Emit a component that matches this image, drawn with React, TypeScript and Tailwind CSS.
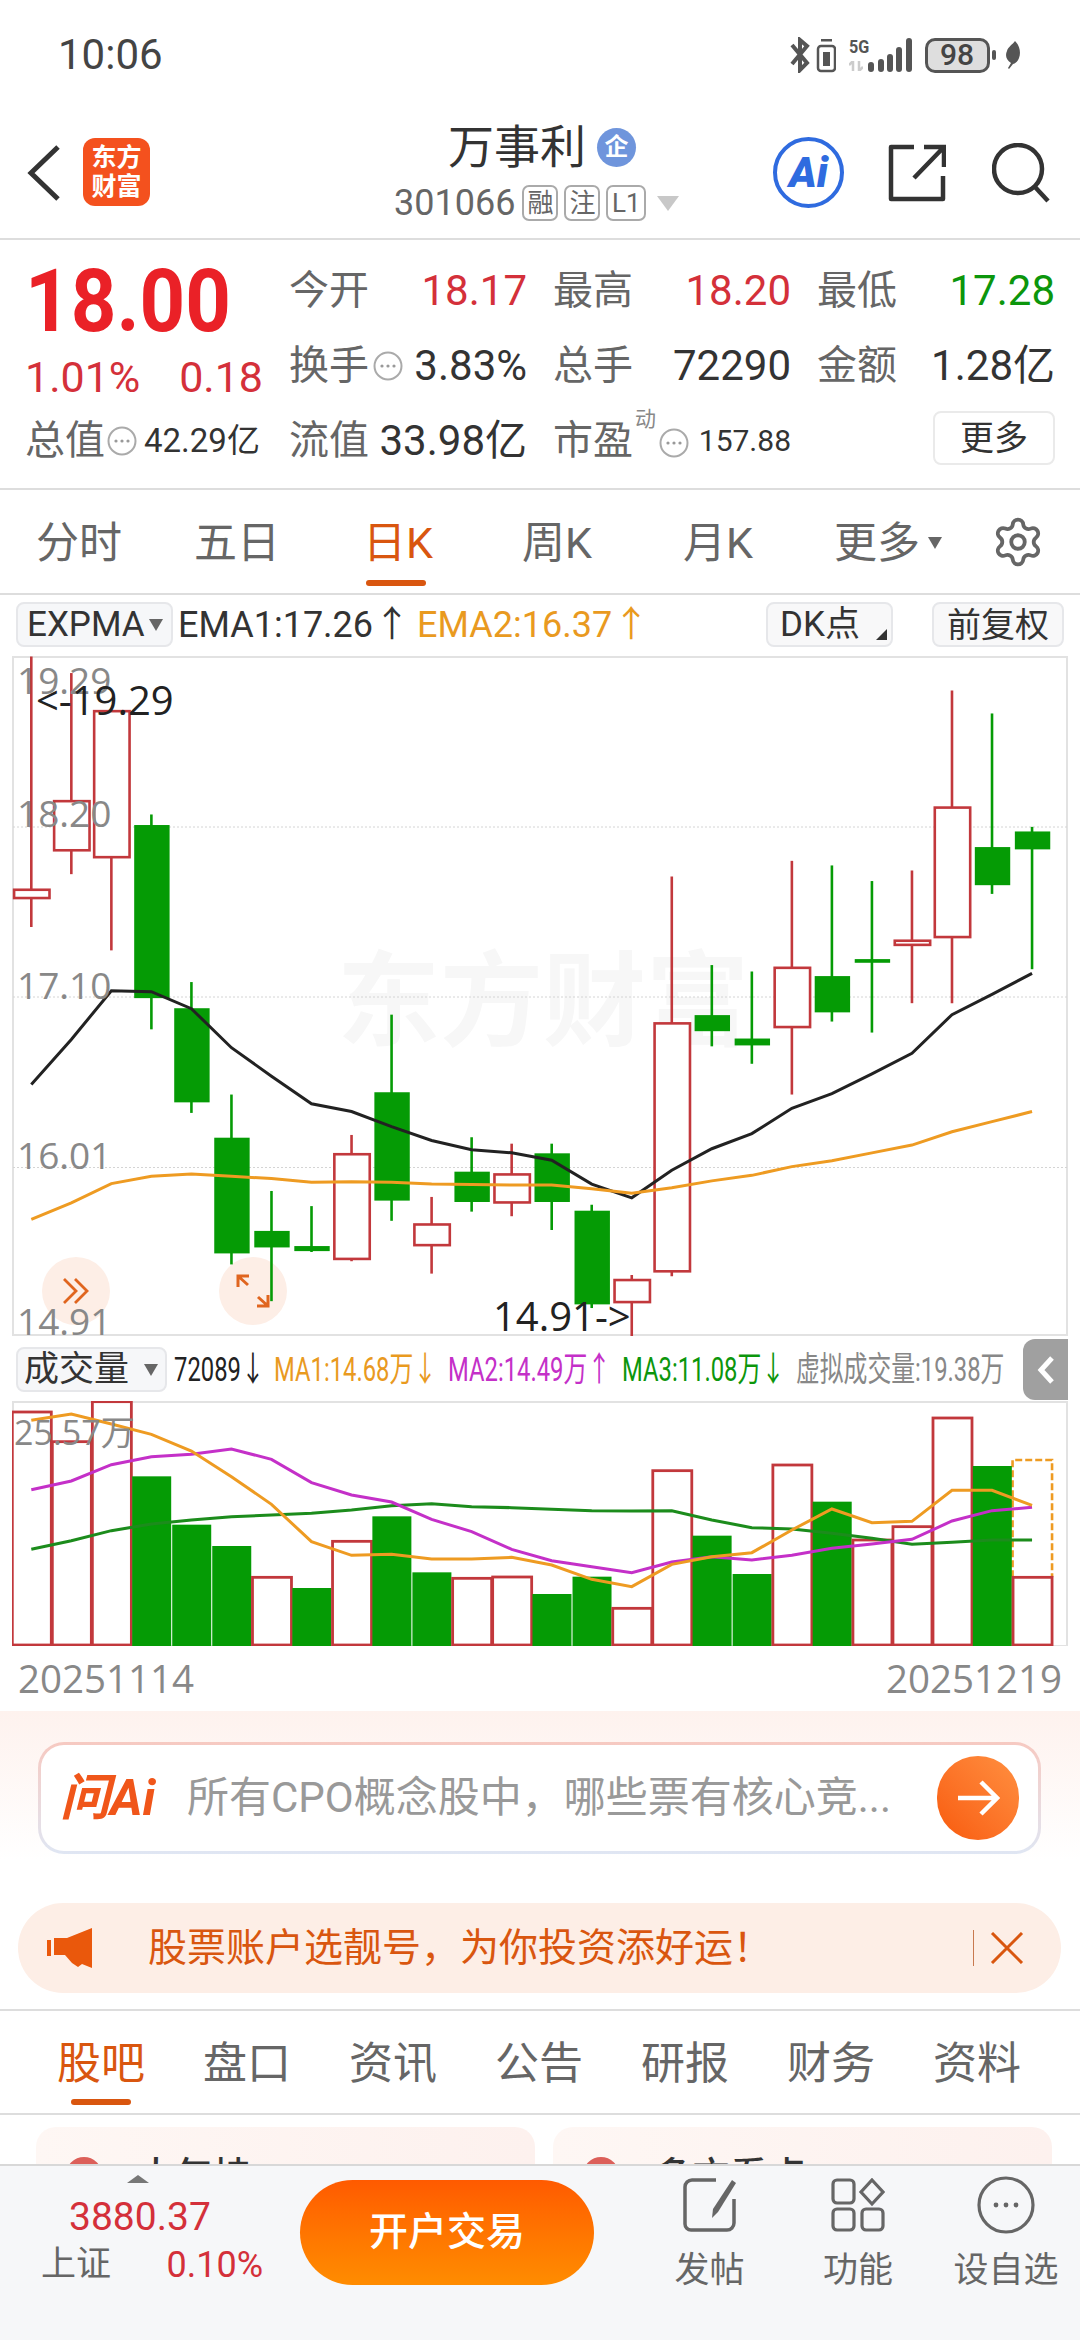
import { Settings } from "lucide-react";
import React from "react";

// ---- chart data, measured from the daily K chart ----
type Candle = { up: boolean; hi: number; lo: number; top: number; bot: number };

const cx = (i: number) => 31.3 + i * 40.03;
const ky = (v: number) => 640 + v / 2.178;
const vy = (v: number) => 1320 + v / 3;

const candles: Candle[] = [
  { up: true, hi: 36, lo: 625, top: 544, bot: 562 },
  { up: true, hi: 72, lo: 510, top: 351, bot: 458 },
  { up: true, hi: 155, lo: 676, top: 155, bot: 473 },
  { up: false, hi: 380, lo: 848, top: 403, bot: 780 },
  { up: false, hi: 745, lo: 1030, top: 802, bot: 1007 },
  { up: false, hi: 990, lo: 1360, top: 1084, bot: 1336 },
  { up: false, hi: 1200, lo: 1440, top: 1287, bot: 1323 },
  { up: false, hi: 1233, lo: 1333, top: 1320, bot: 1331 },
  { up: true, hi: 1078, lo: 1353, top: 1120, bot: 1348 },
  { up: false, hi: 816, lo: 1265, top: 985, bot: 1221 },
  { up: true, hi: 1213, lo: 1380, top: 1273, bot: 1318 },
  { up: false, hi: 1083, lo: 1245, top: 1158, bot: 1224 },
  { up: true, hi: 1097, lo: 1255, top: 1164, bot: 1225 },
  { up: false, hi: 1097, lo: 1285, top: 1118, bot: 1224 },
  { up: false, hi: 1230, lo: 1455, top: 1243, bot: 1447 },
  { up: true, hi: 1383, lo: 1518, top: 1394, bot: 1442 },
  { up: true, hi: 515, lo: 1386, top: 835, bot: 1375 },
  { up: false, hi: 708, lo: 885, top: 817, bot: 852 },
  { up: false, hi: 722, lo: 923, top: 868, bot: 883 },
  { up: true, hi: 481, lo: 990, top: 714, bot: 843 },
  { up: false, hi: 491, lo: 831, top: 732, bot: 811 },
  { up: false, hi: 525, lo: 855, top: 695, bot: 703 },
  { up: true, hi: 502, lo: 791, top: 655, bot: 664 },
  { up: true, hi: 110, lo: 791, top: 365, bot: 647 },
  { up: false, hi: 160, lo: 553, top: 451, bot: 534 },
  { up: false, hi: 407, lo: 717, top: 417, bot: 456 },
];

const ema1 = [968, 870, 764, 766, 803, 888, 950, 1010, 1027, 1060, 1090, 1110, 1117, 1133, 1185, 1215, 1155, 1108, 1075, 1020, 988, 945, 900, 816, 772, 726];
const ema2 = [1262, 1226, 1184, 1168, 1163, 1168, 1173, 1181, 1180, 1181, 1185, 1186, 1187, 1187, 1195, 1205, 1193, 1178, 1166, 1147, 1134, 1117, 1100, 1071, 1049, 1027];

const volumes = [276, 365, 245, 469, 614, 678, 772, 804, 664, 589, 757, 775, 771, 822, 770, 865, 452, 647, 762, 435, 545, 660, 620, 294, 438, 772];
const volUp = [1, 1, 1, 0, 0, 0, 1, 0, 1, 0, 0, 1, 1, 0, 0, 1, 1, 0, 0, 1, 0, 1, 1, 1, 0, 1];
const ma1 = [301, 282, 312, 343, 393, 470, 553, 665, 706, 703, 717, 717, 712, 735, 778, 800, 733, 710, 698, 630, 567, 608, 604, 511, 511, 556];
const ma2 = [509, 483, 434, 410, 403, 387, 418, 488, 525, 546, 598, 635, 688, 722, 740, 758, 726, 710, 720, 706, 685, 672, 658, 603, 572, 562];
const ma3 = [688, 662, 632, 612, 600, 590, 585, 580, 570, 557, 551, 560, 563, 568, 572, 573, 572, 600, 623, 627, 640, 655, 673, 667, 660, 660];

const RED = "#c2383c";
const GREEN = "#059b05";

const toPoints = (vals: number[], y: (v: number) => number) =>
  vals.map((v, i) => `${cx(i)},${y(v)}`).join(" ");

// ---- small bits ----
const DotsIcon = ({ size = 30 }: { size?: number }) => (
  <svg width={size} height={size} viewBox="0 0 30 30" className="shrink-0">
    <circle cx="15" cy="15" r="13.5" fill="none" stroke="#aaa" strokeWidth="2" />
    <circle cx="9" cy="15" r="1.6" fill="#999" />
    <circle cx="15" cy="15" r="1.6" fill="#999" />
    <circle cx="21" cy="15" r="1.6" fill="#999" />
  </svg>
);

const Tri = ({ className }: { className: string }) => (
  <span className={`inline-block w-0 h-0 border-x-[7px] border-x-transparent border-t-[12px] ${className}`} />
);

const StatusBar = () => (
  <div className="h-[90px] flex items-center pl-[58px] pt-[20px]">
    <span className="text-[42px] leading-none text-[#444]">10:06</span>
    <div className="ml-[627px] flex items-center">
      <svg width="46" height="36" viewBox="0 0 46 36">
        <path d="M2 8l15 18-7 7V3l7 6-15 18" fill="none" stroke="#555" strokeWidth="4" />
        <rect x="28" y="9" width="17" height="25" rx="3" fill="none" stroke="#555" strokeWidth="2.5" />
        <rect x="33" y="15" width="7" height="14" fill="#555" />
        <rect x="31" y="2" width="11" height="2.5" fill="#555" />
      </svg>
      <div className="ml-[13px] w-[19px] h-[36px] relative">
        <span className="absolute left-0 top-0 text-[19px] leading-[19px] font-bold text-[#555] whitespace-nowrap font-['Roboto'] scale-x-[0.85] origin-left">
          5G
        </span>
        <svg width="14" height="10" viewBox="0 0 14 10" className="absolute left-[0px] top-[24px]">
          <path d="M4 0v10M0 4l4-4M10 10V0M14 6l-4 4" stroke="#ccc" strokeWidth="2.5" fill="none" />
        </svg>
      </div>
      <svg width="44" height="36" viewBox="0 0 44 36">
        {[
          [0, 25],
          [10, 22],
          [19, 17],
          [28, 10],
          [38, 1],
        ].map(([x, y]) => (
          <rect key={x} x={x} y={y} width="6" height={35 - y} rx="3" fill="#555" />
        ))}
      </svg>
      <div className="ml-[13px] w-[65px] h-[35px] rounded-[10px] border-[3px] border-[#555] bg-[#dedede] flex items-center justify-center text-[30px] font-medium text-[#444] leading-none">
        98
      </div>
      <div className="ml-[2px] w-[4px] h-[10px] rounded-full bg-[#555]" />
      <svg width="18" height="28" viewBox="0 0 18 28" className="ml-[7px]">
        <path d="M12 0c5 5 6 12 4 17-1 3-3 5-6 6l-4 5-1-1 3-5C3 19 2 14 4 10c1-4 5-6 8-10z" fill="#555" />
      </svg>
    </div>
  </div>
);

const Badge = ({ w, children }: { w: string; children: React.ReactNode }) => (
  <span className={`${w} h-[36px] rounded-[7px] border-2 border-[#aaa] text-[#666] text-[26px] leading-none flex items-center justify-center`}>
    {children}
  </span>
);

const Header = () => (
  <header className="h-[150px] border-b-2 border-[#ddd] flex pl-[27px] relative">
    <svg width="33" height="56" viewBox="0 0 33 56" className="mt-[55px] shrink-0">
      <path d="M31 2L4 28l27 26" fill="none" stroke="#333" strokeWidth="5" />
    </svg>
    <div className="ml-[23px] mt-[48px] w-[67px] h-[68px] rounded-[12px] bg-[#f4511e] text-white text-[25px] leading-[29px] font-bold flex flex-col items-center justify-center">
      <span>东方</span>
      <span>财富</span>
    </div>
    {/* stock name + code */}
    <div className="ml-[244px] w-[300px] flex flex-col">
      <div className="mt-[32px] flex items-center pl-[54px]">
        <span className="text-[46px] leading-[50px] text-[#333]">万事利</span>
        <span className="ml-[11px] w-[39px] h-[39px] rounded-full bg-[#6f95dc] text-white text-[24px] font-bold leading-none flex items-center justify-center">
          企
        </span>
      </div>
      <div className="mt-[13px] flex items-center">
        <span className="text-[36px] leading-[36px] text-[#666] font-['Roboto']">301066</span>
        <div className="ml-[7px] flex gap-[6px]">
          <Badge w="w-[36px]">融</Badge>
          <Badge w="w-[36px]">注</Badge>
          <Badge w="w-[40px]">L1</Badge>
        </div>
        <span className="ml-[11px] w-0 h-0 border-x-[11px] border-x-transparent border-t-[15px] border-t-[#c8c8c8]" />
      </div>
    </div>
    {/* actions */}
    <div className="ml-[79px] mt-[47px] w-[71px] h-[71px] rounded-full border-[4px] border-[#2f6bdf] flex items-center justify-center text-[#2f6bdf] text-[42px] font-black italic leading-none font-['Roboto'] shrink-0">
      Ai
    </div>
    <svg width="58" height="58" viewBox="0 0 58 58" className="ml-[44px] mt-[54px] shrink-0">
      <path d="M26 3H3v52h52V32" fill="none" stroke="#333" strokeWidth="4.5" strokeLinejoin="round" />
      <path d="M36 3h20v20M55 4L26 34" fill="none" stroke="#333" strokeWidth="4.5" />
    </svg>
    <svg width="60" height="60" viewBox="0 0 60 60" className="ml-[46px] mt-[53px] shrink-0">
      <circle cx="26" cy="26" r="24" fill="none" stroke="#333" strokeWidth="4.5" />
      <path d="M43 44l13 14" fill="none" stroke="#333" strokeWidth="4.5" />
    </svg>
  </header>
);

const Cell = ({ label, value, color = "text-[#333]" }: { label: string; value: string; color?: string }) => (
  <div className="w-[238px] flex items-center justify-between">
    <span className="text-[40px] leading-[44px] text-[#666]">{label}</span>
    <span className={`text-[42px] leading-[44px] ${color}`}>{value}</span>
  </div>
);

const Quote = () => (
  <section className="h-[250px] border-b-2 border-[#ddd] flex relative">
    <div className="w-[289px] shrink-0 pl-[25px]">
      <div className="mt-[17px] h-[88px] text-[88px] leading-[88px] font-bold text-[#ea2127] origin-left scale-x-[0.905] whitespace-nowrap">
        18.00
      </div>
      <div className="mt-[10px] flex w-[238px] justify-between text-[43px] leading-[44px] text-[#d4303a]">
        <span>1.01%</span>
        <span>0.18</span>
      </div>
      <div className="mt-[20px] flex items-center whitespace-nowrap">
        <span className="text-[40px] leading-[44px] text-[#666]">总值</span>
        <span className="ml-[2px]">
          <DotsIcon />
        </span>
        <span className="ml-[7px] text-[33px] leading-[44px] text-[#333]">42.29亿</span>
      </div>
    </div>
    <div className="flex-1 flex flex-col pt-[29px]">
      <div className="flex gap-[26px] h-[44px]">
        <Cell label="今开" value="18.17" color="text-[#d4303a]" />
        <Cell label="最高" value="18.20" color="text-[#d4303a]" />
        <Cell label="最低" value="17.28" color="text-[#0c960c]" />
      </div>
      <div className="flex gap-[26px] h-[44px] mt-[31px]">
        <div className="w-[238px] flex items-center">
          <span className="text-[40px] leading-[44px] text-[#666]">换手</span>
          <span className="ml-[4px]">
            <DotsIcon />
          </span>
          <span className="ml-auto text-[42px] leading-[44px] text-[#333]">3.83%</span>
        </div>
        <Cell label="总手" value="72290" />
        <Cell label="金额" value="1.28亿" />
      </div>
      <div className="flex gap-[26px] h-[44px] mt-[31px]">
        <div className="w-[238px] flex items-center whitespace-nowrap">
          <span className="text-[40px] leading-[44px] text-[#666]">流值</span>
          <span className="ml-auto text-[42px] leading-[44px] text-[#333]">33.98亿</span>
        </div>
        <div className="w-[238px] flex items-center relative">
          <span className="text-[40px] leading-[44px] text-[#666]">市盈</span>
          <span className="absolute left-[82px] -top-[10px] text-[21px] leading-none text-[#888]">动</span>
          <span className="ml-[26px] mt-[4px]">
            <DotsIcon />
          </span>
          <span className="ml-auto text-[30px] leading-[44px] text-[#333]">157.88</span>
        </div>
        <div className="w-[238px] flex justify-end">
          <button className="-mt-[8px] w-[122px] h-[54px] rounded-[8px] border-2 border-[#eaeaea] text-[34px] leading-none text-[#333]">
            更多
          </button>
        </div>
      </div>
    </div>
  </section>
);

const periods = [
  { label: "分时", cls: "ml-[36px] text-[#666]" },
  { label: "五日", cls: "ml-[72px] text-[#666]" },
  { label: "日K", cls: "ml-[83px] text-[#d9560f] relative" },
  { label: "周K", cls: "ml-[89px] text-[#666]" },
  { label: "月K", cls: "ml-[91px] text-[#666]" },
  { label: "更多", cls: "ml-[81px] text-[#666]" },
];

const PeriodTabs = () => (
  <nav className="h-[105px] border-b-2 border-[#ddd] flex items-center pt-[3px]">
    {periods.map((p) => (
      <span key={p.label} className={`text-[43px] leading-[46px] ${p.cls}`}>
        {p.label}
        {p.label === "日K" && (
          <span className="absolute left-[3px] top-[60px] w-[60px] h-[6px] rounded-full bg-[#d9560f]" />
        )}
      </span>
    ))}
    <Tri className="ml-[8px] border-t-[#666]" />
    <Settings size={54} strokeWidth={1.7} color="#666" className="ml-[49px] -mt-[3px]" />
  </nav>
);

const IndicatorRow = () => (
  <div className="h-[61px] flex items-start pt-[7px] pl-[16px] relative">
    <div className="w-[157px] h-[45px] rounded-[8px] border-2 border-[#e6e7ea] bg-[#f6f7f9] flex items-center pl-[9px] text-[35px] leading-none text-[#333]">
      EXPMA
      <Tri className="ml-[4px] border-t-[#666]" />
    </div>
    <div className="ml-[5px] h-[45px] flex items-center text-[36px] leading-none text-[#333] whitespace-nowrap">
      EMA1:17.26<span className="ml-[1px]">↑</span>
    </div>
    <div className="ml-[7px] h-[45px] flex items-center text-[36px] leading-none text-[#e99a1f] whitespace-nowrap">
      EMA2:16.37<span className="ml-[1px]">↑</span>
    </div>
    <div className="ml-auto w-[127px] h-[45px] rounded-[8px] border-2 border-[#e6e7ea] bg-[#f8f8f9] flex items-center pl-[12px] text-[35px] leading-none text-[#333] relative">
      DK点
      <span className="absolute right-[4px] bottom-[5px] w-0 h-0 border-l-[11px] border-l-transparent border-b-[11px] border-b-[#333]" />
    </div>
    <div className="ml-[39px] mr-[16px] w-[132px] h-[45px] rounded-[8px] border-2 border-[#e6e7ea] bg-[#f8f8f9] flex items-center justify-center text-[34px] leading-none text-[#333]">
      前复权
    </div>
  </div>
);

const PriceLabel = ({ cls, children }: { cls: string; children: React.ReactNode }) => (
  <span className={`absolute leading-[37px] whitespace-nowrap ${cls}`}>{children}</span>
);

const KChart = () => (
  <div className="relative ml-[12px] w-[1056px] h-[680px] font-['Open_Sans','Noto_Sans_CJK_SC',sans-serif]">
    <div className="absolute left-[325px] top-[282px] text-[103px] leading-[112px] font-bold text-[#f7f7f7] whitespace-nowrap font-['Noto_Sans_CJK_SC']">
      东方财富
    </div>
    {/* floating round buttons sit under the candles */}
    <div className="absolute left-[30px] top-[601px] w-[68px] h-[68px] rounded-full bg-[#fdeee6] flex items-center justify-center">
      <svg width="30" height="30" viewBox="0 0 30 30">
        <path d="M3 3l12 12L3 27M14 3l12 12-12 12" fill="none" stroke="#e0651f" strokeWidth="2.8" />
      </svg>
    </div>
    <div className="absolute left-[207px] top-[601px] w-[68px] h-[68px] rounded-full bg-[#fdeee6] flex items-center justify-center">
      <svg width="36" height="36" viewBox="0 0 36 36">
        <path d="M3 14V3h11M3 3l10 9M33 22v11H22M33 33l-10-9" fill="none" stroke="#e0651f" strokeWidth="3" />
      </svg>
    </div>
    <svg width="1056" height="680" viewBox="12 656 1056 680" className="absolute left-0 top-0">
      <rect x="13" y="657" width="1054" height="678" fill="none" stroke="#e2e2e2" strokeWidth="2" />
      {[827, 997, 1167.5].map((y) => (
        <line key={y} x1="13" x2="1067" y1={y} y2={y} stroke="#d4d4d4" strokeDasharray="2 2" />
      ))}
      {candles.map((c, i) => {
        const col = c.up ? RED : GREEN;
        const top = ky(c.top);
        const bot = ky(c.bot);
        return (
          <g key={i}>
            <line x1={cx(i)} x2={cx(i)} y1={ky(c.hi)} y2={ky(c.lo)} stroke={col} strokeWidth="2.6" />
            {c.up ? (
              <rect x={cx(i) - 17.2} y={top} width="35.4" height={Math.max(bot - top, 3)} fill="#fff" stroke={col} strokeWidth="2.6" />
            ) : (
              <rect x={cx(i) - 17.2} y={top} width="35.4" height={Math.max(bot - top, 3)} fill={col} />
            )}
          </g>
        );
      })}
      <polyline points={toPoints(ema1, ky)} fill="none" stroke="#222" strokeWidth="3" />
      <polyline points={toPoints(ema2, ky)} fill="none" stroke="#ee9b22" strokeWidth="3" />
    </svg>
    <PriceLabel cls="left-[5px] top-[5px] text-[37px] text-[#888]">19.29</PriceLabel>
    <PriceLabel cls="left-[5px] top-[138px] text-[37px] text-[#888]">18.20</PriceLabel>
    <PriceLabel cls="left-[5px] top-[310px] text-[37px] text-[#888]">17.10</PriceLabel>
    <PriceLabel cls="left-[5px] top-[480px] text-[37px] text-[#888]">16.01</PriceLabel>
    <PriceLabel cls="left-[5px] top-[646px] text-[37px] text-[#888]">14.91</PriceLabel>
    <PriceLabel cls="left-[24px] top-[25px] text-[40px] text-[#222]">{"<-19.29"}</PriceLabel>
    <PriceLabel cls="left-[481px] top-[641px] text-[40px] text-[#222]">{"14.91->"}</PriceLabel>
  </div>
);

const NarrowItem = ({ w, cls, children }: { w: string; cls: string; children: React.ReactNode }) => (
  <span className={`${w} ${cls} shrink-0 block text-[34px] leading-[40px] whitespace-nowrap origin-left scale-x-[0.7]`}>
    {children}
  </span>
);

const VolumeRow = () => (
  <div className="h-[65px] flex items-start pl-[16px] relative">
    <div className="mt-[11px] w-[151px] h-[45px] rounded-[8px] border-2 border-[#e6e7ea] bg-[#f6f7f9] flex items-center pl-[6px] text-[35px] leading-none text-[#333]">
      成交量
      <Tri className="ml-[15px] border-t-[#666]" />
    </div>
    <div className="ml-[7px] mt-[13px] flex items-center">
      <NarrowItem w="w-[100px]" cls="text-[#222]">72089↓</NarrowItem>
      <NarrowItem w="w-[174px]" cls="text-[#e99a1f]">MA1:14.68万↓</NarrowItem>
      <NarrowItem w="w-[174px]" cls="text-[#c430c8]">MA2:14.49万↑</NarrowItem>
      <NarrowItem w="w-[174px]" cls="text-[#0c960c]">MA3:11.08万↓</NarrowItem>
      <NarrowItem w="w-[210px]" cls="text-[#888]">虚拟成交量:19.38万</NarrowItem>
    </div>
    <div className="absolute left-[1023px] top-[3px] w-[45px] h-[61px] rounded-l-[12px] bg-[#a0a0a0] flex items-center justify-center">
      <svg width="18" height="30" viewBox="0 0 18 30">
        <path d="M15 3L4 15l11 12" fill="none" stroke="#fff" strokeWidth="5" />
      </svg>
    </div>
  </div>
);

const VolumeChart = () => (
  <div className="relative ml-[12px] w-[1056px] h-[245px] font-['Open_Sans','Noto_Sans_CJK_SC',sans-serif]">
    <svg width="1056" height="245" viewBox="12 1401 1056 245" className="absolute left-0 top-0">
      <rect x="13" y="1402" width="1054" height="244" fill="none" stroke="#e2e2e2" strokeWidth="2" />
      <path d={`M${cx(25) - 19.5} ${vy(772)}V${vy(420)}H${cx(25) + 20}V${vy(772)}`} fill="none" stroke="#ee9b22" strokeWidth="2.6" strokeDasharray="7 3" />
      {volumes.map((v, i) => {
        const top = vy(v);
        return volUp[i] ? (
          <rect key={i} x={cx(i) - 19} y={top} width="39" height={1645 - top} fill="#fff" stroke={RED} strokeWidth="2.8" />
        ) : (
          <rect key={i} x={cx(i) - 19.2} y={top} width="39" height={1646 - top} fill={GREEN} />
        );
      })}
      <polyline points={toPoints(ma3, vy)} fill="none" stroke="#1c8c1c" strokeWidth="3" />
      <polyline points={toPoints(ma2, vy)} fill="none" stroke="#c430c8" strokeWidth="3" />
      <polyline points={toPoints(ma1, vy)} fill="none" stroke="#ee9b22" strokeWidth="3" />
    </svg>
    <span className="absolute left-[2px] top-[11px] text-[34px] leading-[40px] text-[#888] whitespace-nowrap">25.57万</span>
  </div>
);

const AiBox = () => (
  <section className="pt-[31px] pb-[6px] px-[38px] bg-gradient-to-b from-[#fef2ee] to-white">
    <div className="h-[112px] w-[1003px] p-[3px] rounded-[26px] bg-gradient-to-b from-[#f6c9c1] to-[#dfe6f3]">
      <div className="h-full rounded-[23px] bg-white flex items-center pl-[19px] pr-[19px]">
        <span className="w-[100px] text-[50px] leading-none font-bold italic text-[#f0561a] font-['Roboto','Noto_Sans_CJK_SC'] whitespace-nowrap">
          问Ai
        </span>
        <span className="ml-[27px] text-[42px] leading-none text-[#999] whitespace-nowrap">
          所有CPO概念股中，哪些票有核心竞...
        </span>
        <span className="ml-auto w-[82px] h-[84px] rounded-full bg-gradient-to-tr from-[#f85a08] to-[#ff8f3f] flex items-center justify-center shrink-0">
          <svg width="44" height="40" viewBox="0 0 44 40">
            <path d="M2 20h38M25 4l16 16-16 16" fill="none" stroke="#fff" strokeWidth="4.5" />
          </svg>
        </span>
      </div>
    </div>
  </section>
);

const Notice = () => (
  <div className="mt-[43px] mx-[18px] w-[1043px] h-[90px] rounded-full bg-[#fdeee6] flex items-center pl-[29px]">
    <svg width="46" height="40" viewBox="0 0 46 40" className="shrink-0">
      <rect x="0" y="12" width="4" height="16" fill="#ea580c" />
      <path d="M7 10h13L45 0v40l-10-4-4 3-6-4-7-8H7z" fill="#ea580c" />
    </svg>
    <span className="ml-[55px] text-[39px] leading-none text-[#d9560f] whitespace-nowrap">
      股票账户选靓号，为你投资添好运！
    </span>
    <span className="ml-[201px] w-[1px] h-[36px] bg-[#c8794f]" />
    <svg width="34" height="32" viewBox="0 0 34 32" className="ml-[16px]">
      <path d="M2 1l30 30M32 1L2 31" fill="none" stroke="#d9560f" strokeWidth="3" />
    </svg>
  </div>
);

const subTabs = ["股吧", "盘口", "资讯", "公告", "研报", "财务", "资料"];

const SubTabs = () => (
  <nav className="mt-[16px] h-[106px] border-y-2 border-[#ddd] flex pl-[57px] gap-[60px] relative">
    {subTabs.map((t, i) => (
      <span
        key={t}
        className={`mt-[30px] w-[86px] text-[44px] leading-[46px] whitespace-nowrap ${i === 0 ? "text-[#d9560f]" : "text-[#666]"}`}
      >
        {t}
      </span>
    ))}
    <span className="absolute left-[71px] top-[88px] w-[60px] h-[6px] rounded-full bg-[#d9560f]" />
  </nav>
);

const HotCard = ({ title }: { title: string }) => (
  <div className="w-[499px] h-[120px] rounded-[20px] bg-gradient-to-r from-[#fef7f4] to-[#fdf1ee] flex items-start pt-[30px] pl-[30px]">
    <span className="w-[36px] h-[36px] rounded-full bg-[#dc5f59] shrink-0" />
    <span className="ml-[35px] text-[38px] leading-none font-medium text-[#333] whitespace-nowrap">{title}</span>
  </div>
);

const BarAction = ({ cls, label, children }: { cls: string; label: string; children: React.ReactNode }) => (
  <div className={`${cls} flex flex-col items-center shrink-0`}>
    <div className="mt-[10px] h-[58px] flex items-center">{children}</div>
    <span className="mt-[17px] text-[35px] leading-[40px] text-[#666] whitespace-nowrap">{label}</span>
  </div>
);

const BottomBar = () => (
  <footer className="h-[176px] shrink-0 border-t-2 border-[#d8d8d8] bg-[#f6f7f9] flex">
    <div className="w-[300px] shrink-0 flex flex-col">
      <span className="mt-[9px] ml-[127px] w-0 h-0 border-x-[11px] border-x-transparent border-b-[8px] border-b-[#777]" />
      <span className="mt-[12px] ml-[69px] text-[39px] leading-[44px] text-[#d4303a]">3880.37</span>
      <div className="mt-[4px] pl-[41px] pr-[37px] flex items-center justify-between">
        <span className="text-[35px] leading-[44px] text-[#666]">上证</span>
        <span className="text-[36px] leading-[44px] text-[#d4303a]">0.10%</span>
      </div>
    </div>
    <button className="mt-[14px] w-[294px] h-[105px] rounded-full bg-gradient-to-b from-[#ff5a00] to-[#ff8c00] text-white text-[39px] font-medium leading-none">
      开户交易
    </button>
    <BarAction cls="ml-[81px] w-[69px]" label="发帖">
      <svg width="56" height="56" viewBox="0 0 56 56">
        <path d="M34 3H10a7 7 0 0 0-7 7v37a6 6 0 0 0 6 6h36a7 7 0 0 0 7-7V22" fill="none" stroke="#666" strokeWidth="3.5" />
        <path d="M50 3l4 3-18 29-6 6 1-9z" fill="#666" />
      </svg>
    </BarAction>
    <BarAction cls="ml-[79px] w-[70px]" label="功能">
      <svg width="54" height="54" viewBox="0 0 54 54">
        <rect x="2" y="2" width="21" height="23" rx="4" fill="none" stroke="#666" strokeWidth="3.2" />
        <rect x="2" y="31" width="21" height="21" rx="4" fill="none" stroke="#666" strokeWidth="3.2" />
        <rect x="31" y="31" width="21" height="21" rx="4" fill="none" stroke="#666" strokeWidth="3.2" />
        <path d="M41 2l11 12-11 12-11-12z" fill="none" stroke="#666" strokeWidth="3.2" />
      </svg>
    </BarAction>
    <BarAction cls="ml-[61px] w-[104px]" label="设自选">
      <svg width="58" height="58" viewBox="0 0 58 58">
        <circle cx="29" cy="29" r="27" fill="none" stroke="#666" strokeWidth="3.2" />
        <circle cx="19" cy="29" r="2.4" fill="#666" />
        <circle cx="29" cy="29" r="2.4" fill="#666" />
        <circle cx="39" cy="29" r="2.4" fill="#666" />
      </svg>
    </BarAction>
  </footer>
);

export default function App() {
  return (
    <div className="w-[1080px] h-[2340px] bg-white flex flex-col overflow-hidden font-['Roboto','Noto_Sans_CJK_SC',sans-serif]">
      <div className="flex-1 overflow-hidden">
        <StatusBar />
        <Header />
        <Quote />
        <PeriodTabs />
        <IndicatorRow />
        <KChart />
        <VolumeRow />
        <VolumeChart />
        <div className="h-[65px] px-[18px] flex items-center justify-between text-[38.5px] leading-none text-[#888] font-['Open_Sans']">
          <span>20251114</span>
          <span>20251219</span>
        </div>
        <AiBox />
        <Notice />
        <SubTabs />
        <div className="mt-[12px] pl-[36px] flex gap-[18px]">
          <HotCard title="大年持" />
          <HotCard title="多方看点" />
        </div>
      </div>
      <BottomBar />
    </div>
  );
}
